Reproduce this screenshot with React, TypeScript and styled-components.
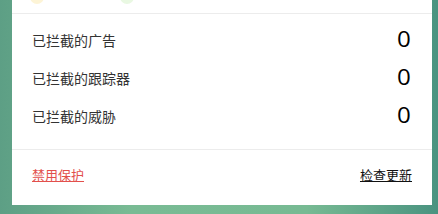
import React from "react";
import styled, { createGlobalStyle } from "styled-components";

const Global = createGlobalStyle`
  html, body { margin: 0; padding: 0; }
  body {
    width: 438px;
    height: 214px;
    overflow: hidden;
    background: linear-gradient(90deg, #5d9f85 0%, #79bb94 30%, #77ba93 70%, #4a9380 100%);
    font-family: "Noto Sans CJK SC", "Microsoft YaHei", sans-serif;
  }
`;

const Stage = styled.div`
  display: flex;
  padding: 0 6px 9px 12px;
  height: 214px;
  box-sizing: border-box;
`;

const Panel = styled.div`
  flex: 1;
  background: #ffffff;
  display: flex;
  flex-direction: column;
`;

const Header = styled.div`
  height: 13px;
  border-bottom: 1px solid #ececec;
  display: flex;
  align-items: flex-end;
  overflow: hidden;
  padding-left: 18px;
  gap: 76px;
`;

const Blob = styled.div<{ $c: string }>`
  width: 14px;
  height: 14px;
  border-radius: 50%;
  background: ${(p) => p.$c};
  margin-bottom: 9px;
`;

const List = styled.div`
  padding: 7px 20px 14px 20px;
  border-bottom: 1px solid #ececec;
  display: flex;
  flex-direction: column;
`;

const Row = styled.div`
  height: 38px;
  display: flex;
  align-items: center;
  justify-content: space-between;
`;

const Label = styled.span`
  font-size: 14px;
  color: #333333;
  margin-top: -1px;
`;

const Count = styled.span`
  font-family: "Open Sans", sans-serif;
  font-weight: 400;
  font-size: 21px;
  line-height: 1;
  color: #000000;
  padding-right: 1px;
  margin-top: -2px;
  transform: scaleX(1.15);
  transform-origin: right center;
`;

const Footer = styled.div`
  flex: 1;
  display: flex;
  align-items: center;
  justify-content: space-between;
  padding: 0 20px 0 20px;
`;

const Link = styled.a<{ $danger?: boolean }>`
  font-size: 13px;
  color: ${(p) => (p.$danger ? "#e2504c" : "#111111")};
  text-decoration: underline;
  cursor: pointer;
  margin-top: -6px;
`;

export default function App() {
  const rows = ["已拦截的广告", "已拦截的跟踪器", "已拦截的威胁"];
  return (
    <>
      <Global />
      <Stage>
        <Panel>
          <Header>
            <Blob $c="#fdf4d6" />
            <Blob $c="#e9f8e2" />
          </Header>
          <List>
            {rows.map((r) => (
              <Row key={r}>
                <Label>{r}</Label>
                <Count>0</Count>
              </Row>
            ))}
          </List>
          <Footer>
            <Link $danger>禁用保护</Link>
            <Link>检查更新</Link>
          </Footer>
        </Panel>
      </Stage>
    </>
  );
}
